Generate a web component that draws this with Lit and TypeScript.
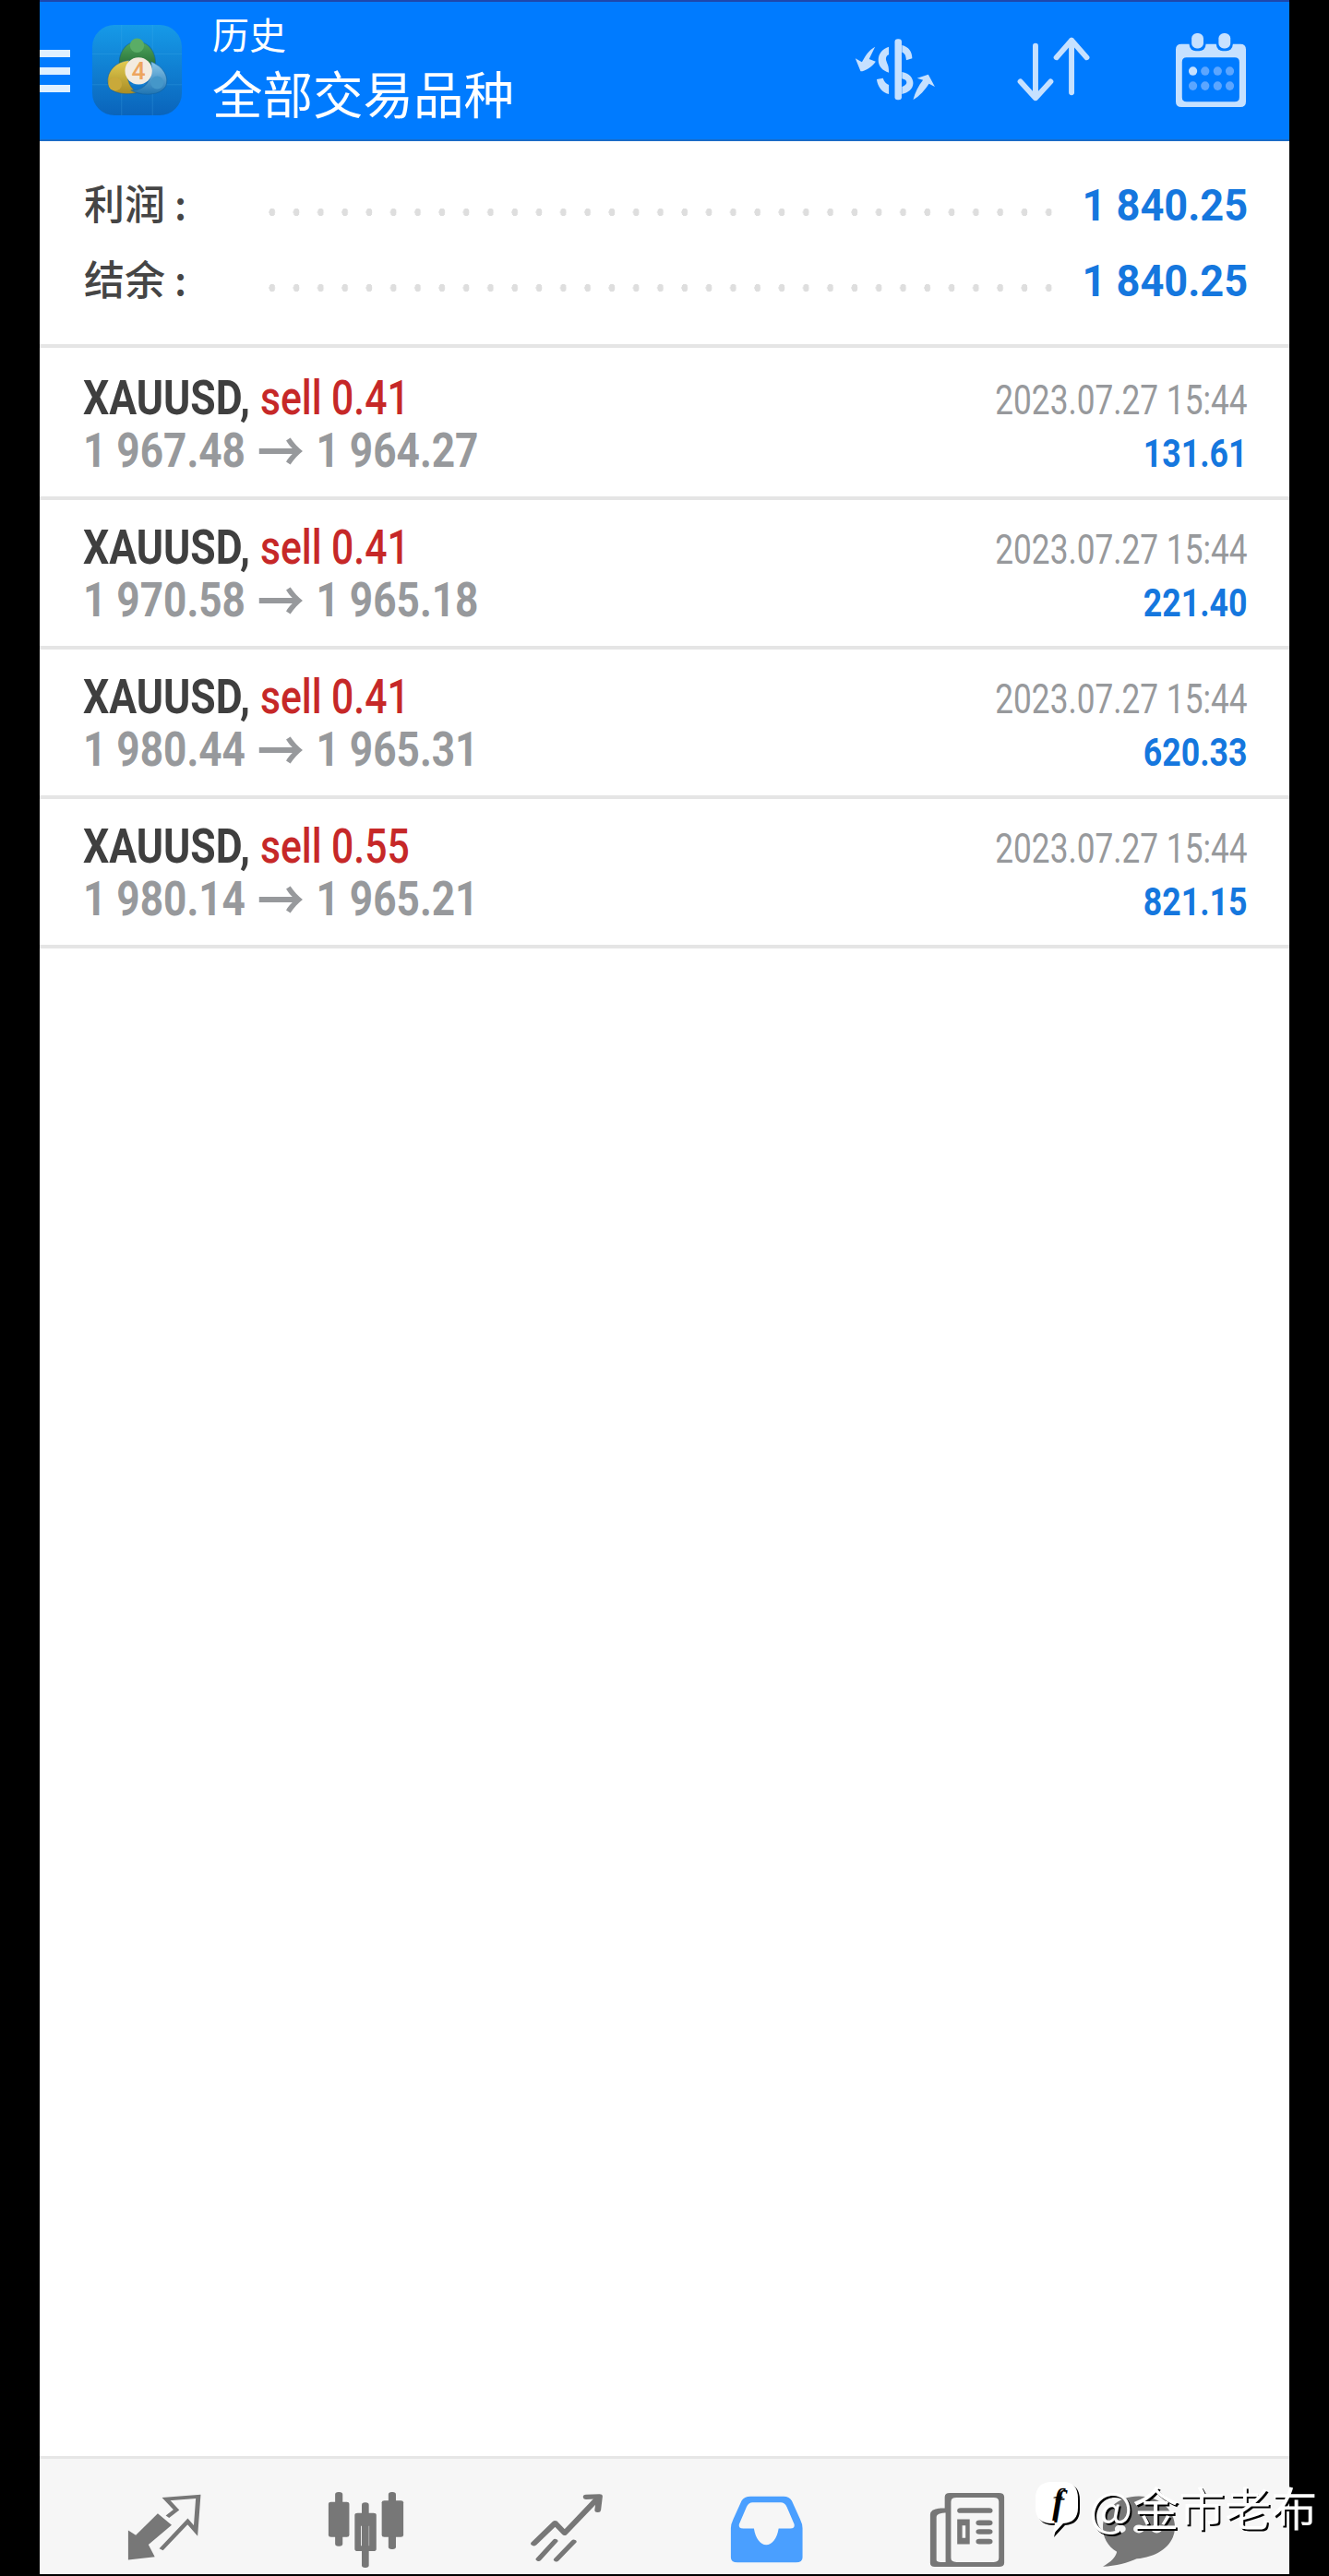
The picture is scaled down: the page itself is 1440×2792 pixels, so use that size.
import { LitElement, html, css, svg } from "lit";
import { customElement } from "lit/decorators.js";

const ROWS = [
  { lot: "0.41", from: "1 967.48", to: "1 964.27", profit: "131.61" },
  { lot: "0.41", from: "1 970.58", to: "1 965.18", profit: "221.40" },
  { lot: "0.41", from: "1 980.44", to: "1 965.31", profit: "620.33" },
  { lot: "0.55", from: "1 980.14", to: "1 965.21", profit: "821.15" },
];

const HI = "#c6e1ff";
const GR = "#777777";

@customElement("app-root")
export class AppRoot extends LitElement {
  static styles = css`
    :host { display: block; }
    .page { background: #000; height: 2792px; padding: 0 43px; box-sizing: border-box; display: flex; flex-direction: column; font-family: Roboto, "Noto Sans CJK SC", sans-serif; position: relative; overflow: hidden; }
    .screen { flex: 1; background: #fff; display: flex; flex-direction: column; margin-bottom: 2px; }
    .top { height: 153px; box-sizing: border-box; background: #007bff; border-top: 2px solid #1d47ad; border-bottom: 2px solid #1a6cc8; display: flex; align-items: center; color: #fff; }
    .burger { width: 33px; display: flex; flex-direction: column; gap: 11px; }
    .burger i { display: block; height: 8px; background: #dff0ff; }
    .logo { width: 97px; height: 98px; margin-left: 24px; margin-top: -2px; display: block; }
    .titles { margin-left: 33px; display: flex; flex-direction: column; gap: 8px; font-family: "Noto Sans CJK SC", sans-serif; margin-top: -6px; }
    .t1 { font-size: 40px; line-height: 44px; }
    .t2 { font-size: 54.5px; line-height: 68px; }
    .acts { margin-left: auto; display: flex; align-items: center; padding-right: 47px; margin-top: -4px; }
    .acts svg { display: block; }
    .i1 { width: 89px; height: 70px; }
    .i2 { width: 82px; height: 72px; margin-left: 86px; }
    .i3 { width: 76px; height: 82px; margin-left: 92px; }
    .summary { padding: 27px 45px 0 48px; box-sizing: border-box; border-bottom: 4px solid #e5e5e5; height: 224px; flex: none; }
    .sum { height: 82px; display: flex; align-items: center; }
    .lab { width: 200px; flex: none; font-family: "Noto Sans CJK SC", sans-serif; font-size: 44px; font-weight: 500; color: #454545; line-height: 82px; margin-top: -2px; margin-bottom: 2px; }
    .dots { flex: 1; height: 10px; margin-top: 18px; background-image: radial-gradient(ellipse 3.6px 4.4px at 3.8px 5px, #dedede 90%, transparent 100%); background-size: 26.3px 10px; background-repeat: repeat-x; margin-right: 32px; }
    .val { font-size: 48px; font-weight: 700; color: #1577de; width: 178px; white-space: nowrap; text-align: right; line-height: 82px; margin-top: 4px; display: flex; justify-content: flex-end; }
    .val span { display: inline-block; transform: scaleX(.94); transform-origin: right; }
    .row { height: 162px; flex: none; box-sizing: border-box; border-bottom: 4px solid #e5e5e5; padding: 23px 45px 0 47px; display: grid; grid-template-columns: 1fr auto; grid-auto-rows: 57px; align-items: baseline; line-height: 57px; }
    .summary + .row { height: 165px; padding-top: 26px; }
    .l1 { display: flex; align-items: baseline; white-space: nowrap; font-size: 52px; }
    .sym { display: inline-block; font-weight: 700; color: #3f3f3f; transform: scaleX(.855); transform-origin: left; margin-right: -20px; }
    .sell { display: inline-block; color: #c62828; font-weight: 500; transform: scaleX(.82); transform-origin: left; }
    .time { font-size: 44px; color: #97999c; transform: scaleX(.8); transform-origin: right; white-space: nowrap; text-align: right; }
    .l2 { font-size: 52px; font-weight: 700; color: #97999c; white-space: nowrap; transform: scaleX(.85); transform-origin: left; }
    .arrow { font-family: "Noto Sans CJK SC", sans-serif; font-size: 60px; line-height: 0; font-weight: 700; margin: 0 15px; vertical-align: -6px; }
    .profit { font-size: 42px; font-weight: 700; color: #1577de; transform: scaleX(.85); transform-origin: right; text-align: right; white-space: nowrap; }
    .fill { flex: 1; }
    .nav { height: 128px; box-sizing: border-box; border-top: 3px solid #e6e6e6; background: #f6f6f6; display: flex; gap: 137px; padding-left: 95px; flex: none; }
    .nav svg { display: block; margin-top: 38px; }
    .n1 { width: 80px; height: 74px; }
    .n2 { width: 83px; height: 82px; margin-top: 36px !important; }
    .n3 { width: 79px; height: 74px; }
    .n4 { width: 79px; height: 73px; margin-top: 40px !important; }
    .n5 { width: 82px; height: 80px; margin-top: 37px !important; }
    .n6 { width: 78px; height: 80px; margin-left: -31px; margin-top: 37px !important; }
    .mark { position: absolute; left: 1122px; top: 2682px; display: flex; align-items: center; gap: 10px; color: #fff; font-family: "Noto Sans CJK SC", sans-serif; font-size: 50px; line-height: 60px; white-space: nowrap; text-shadow: 2px 2px 0 #000; }
    .bubble { width: 48px; height: 60px; display: block; margin-top: 8px; }
  `;

  private logo() {
    return html`<svg class="logo" viewBox="60 45 290 295" preserveAspectRatio="none">
      <defs>
        <linearGradient id="lg" x1="0" y1="0" x2="0" y2="1"><stop offset="0" stop-color="#169ae8"/><stop offset="1" stop-color="#0a64bb"/></linearGradient>
        <linearGradient id="lgy" x1="0" y1="0" x2="0" y2="1"><stop offset="0" stop-color="#e3cd52"/><stop offset="1" stop-color="#a88c24"/></linearGradient>
        <linearGradient id="lgg" x1="0" y1="0" x2="0" y2="1"><stop offset="0" stop-color="#4fa75c"/><stop offset="1" stop-color="#256c35"/></linearGradient>
        <linearGradient id="lgb" x1="0" y1="0" x2="0" y2="1"><stop offset="0" stop-color="#8cc8ea"/><stop offset="1" stop-color="#1f74b2"/></linearGradient>
      </defs>
      <rect x="60" y="45" width="290" height="295" rx="72" fill="url(#lg)"/>
      <path d="M60 140H350M60 240H350M155 45V340M255 45V340" stroke="#4db4ee" stroke-opacity=".35" stroke-width="2"/>
      <path d="M148 185C142 140 165 100 205 100C248 100 270 140 264 185C240 160 172 160 148 185Z" fill="url(#lgg)" stroke="#0f5f9e" stroke-opacity=".55" stroke-width="3"/>
      <circle cx="205" cy="112" r="23" fill="#5aad66"/>
      <path d="M180 160C135 165 108 195 110 232C112 262 150 278 205 266C175 245 165 205 180 160Z" fill="url(#lgy)" stroke="#0f5f9e" stroke-opacity=".55" stroke-width="3"/>
      <circle cx="134" cy="238" r="22" fill="#c9a93a"/>
      <path d="M250 165C290 180 310 215 298 245C280 275 225 280 185 258C225 262 262 225 250 165Z" fill="url(#lgb)" stroke="#0f5f9e" stroke-opacity=".55" stroke-width="3"/>
      <circle cx="270" cy="233" r="21" fill="#4597c9"/>
      <circle cx="210" cy="195" r="44" fill="#f3ebe0"/>
      <text x="210" y="224" text-anchor="middle" font-size="80" font-family="Roboto, sans-serif" font-weight="500" fill="#eda55f">4</text>
    </svg>`;
  }

  private cashIcon() {
    return html`<svg class="i1" viewBox="125 110 250 210" preserveAspectRatio="none">
      <g fill="${HI}">
        <rect x="250" y="117" width="21" height="198" rx="9"/>
        <path d="M272 137C292 142 303 158 303 180L285 186C284 170 280 162 272 160Z"/>
        <path d="M272 224C295 228 306 245 306 260C306 280 290 292 272 296V272C282 268 286 264 286 258C286 252 282 248 272 246Z"/>
        <path d="M232 142V168C222 172 222 182 225 190C228 200 232 202 232 226C212 220 200 205 200 185C200 165 212 148 232 142Z"/>
        <path d="M195 248L214 244C218 256 224 262 232 266V296C212 292 198 272 195 248Z"/>
        <path d="M190 142L172 182L192 190C180 208 160 222 146 222L130 180L150 192C160 172 172 152 190 142Z"/>
        <path d="M306 314C312 290 322 268 336 250L318 244L352 232L372 272L354 262C342 282 326 302 306 314Z"/>
      </g>
    </svg>`;
  }

  private sortIcon() {
    return html`<svg class="i2" viewBox="610 112 235 216" preserveAspectRatio="none">
      <g fill="none" stroke="${HI}" stroke-width="17" stroke-linecap="round" stroke-linejoin="round">
        <path d="M673 144V314M626 260L673 314L720 260"/>
        <path d="M785 296V126M738 182L785 126L832 182"/>
      </g>
    </svg>`;
  }

  private calIcon() {
    const blue = "#5ca6ff";
    return html`<svg class="i3" viewBox="1103 95 213 240" preserveAspectRatio="none">
      <path fill-rule="evenodd" fill="${HI}" d="M1120 135H1299Q1316 135 1316 152V318Q1316 335 1299 335H1120Q1103 335 1103 318V152Q1103 135 1120 135ZM1136 178Q1122 178 1122 192V304Q1122 318 1136 318H1282Q1296 318 1296 304V192Q1296 178 1282 178Z"/>
      <rect x="1144" y="95" width="50" height="62" rx="20" fill="#007bff"/>
      <rect x="1226" y="95" width="50" height="62" rx="20" fill="#007bff"/>
      <rect x="1151" y="101" width="36" height="48" rx="16" fill="${HI}"/>
      <rect x="1233" y="101" width="36" height="48" rx="16" fill="${HI}"/>
      ${[1155, 1192, 1230, 1267].map((x, i) => svg`
        <ellipse cx="${x}" cy="221" rx="13" ry="14" fill="${i === 0 ? HI : blue}"/>
        <ellipse cx="${x}" cy="268" rx="13" ry="14" fill="${blue}"/>`)}
    </svg>`;
  }

  private navIcons() {
    return html`
      <svg class="n1" viewBox="300 200 175 215" preserveAspectRatio="none">
        <path fill="${GR}" d="M302 408V315L320 330L372 262L405 298L350 360L365 398Z"/>
        <path fill="none" stroke="${GR}" stroke-width="11" d="M395 272L416 250L392 216L468 208L462 316L443 287L380 375"/>
      </svg>
      <svg class="n2" viewBox="768 180 184 246" preserveAspectRatio="none">
        <g fill="${GR}">
          <rect x="786" y="180" width="18" height="176" rx="8"/>
          <rect x="770" y="212" width="50" height="114" rx="6"/>
          <rect x="850" y="214" width="17" height="212" rx="8"/>
          <rect x="914" y="180" width="18" height="186" rx="8"/>
          <rect x="898" y="208" width="52" height="118" rx="6"/>
          <path fill-rule="evenodd" d="M840 248H878Q885 248 885 255V365Q885 372 878 372H840Q833 372 833 365V255Q833 248 840 248ZM848 290V355H868V290Z"/>
        </g>
      </svg>
      <svg class="n3" viewBox="1246 190 176 220" preserveAspectRatio="none">
        <g fill="none" stroke="${GR}" stroke-linecap="round" stroke-linejoin="round">
          <path stroke-width="15" d="M1254 350L1305 284L1328 316L1408 204"/>
          <path stroke-width="15" d="M1380 200L1412 198L1408 242"/>
          <path stroke-width="13" d="M1305 342L1265 400M1350 344L1308 402"/>
        </g>
      </svg>
      <svg class="n4" viewBox="150 188 177 222" preserveAspectRatio="none">
        <path fill="#4a9fff" fill-rule="evenodd" d="M200 190H280Q294 190 300 205L320 265Q326 282 326 295V392Q326 408 310 408H168Q152 408 152 392V295Q152 282 158 265L178 205Q184 190 200 190ZM205 210Q195 210 190 225L172 282Q170 296 182 296H208C212 330 224 350 238 350C252 350 264 330 268 296H296Q308 296 306 282L288 225Q283 210 273 210Z"/>
      </svg>
      <svg class="n5" viewBox="623 180 182 238" preserveAspectRatio="none">
        <g fill="${GR}">
          <path fill-rule="evenodd" d="M672 180H790Q803 180 803 193V405Q803 418 790 418H636Q625 418 625 405V250Q625 232 650 229H660V193Q660 180 672 180ZM688 195Q675 195 675 208V390Q675 403 688 403H778Q790 403 790 390V208Q790 195 778 195ZM660 244Q640 246 640 258V396Q640 403 650 403H662V244Z"/>
          <rect x="690" y="228" width="85" height="17" rx="8"/>
          <rect x="735" y="268" width="40" height="17" rx="8"/>
          <rect x="735" y="297" width="40" height="16" rx="8"/>
          <rect x="735" y="328" width="40" height="17" rx="8"/>
          <path fill-rule="evenodd" d="M690 265H720V345H690ZM702 285V325H710V285Z"/>
        </g>
      </svg>
      <svg class="n6" viewBox="1035 180 170 236" preserveAspectRatio="none">
        <path fill="${GR}" d="M1120 190C1170 190 1205 235 1205 290C1205 345 1165 385 1115 390C1095 402 1065 414 1035 415C1055 400 1065 385 1068 368C1045 350 1035 320 1035 290C1035 235 1070 190 1120 190Z"/>
        <ellipse cx="1076" cy="295" rx="13" ry="13" fill="#f6f6f6"/>
        <ellipse cx="1120" cy="295" rx="13" ry="13" fill="#f6f6f6"/>
        <ellipse cx="1162" cy="295" rx="13" ry="13" fill="#f6f6f6"/>
      </svg>`;
  }

  render() {
    return html`<div class="page">
      <div class="screen">
        <header class="top">
          <div class="burger"><i></i><i></i><i></i></div>
          ${this.logo()}
          <div class="titles"><span class="t1">历史</span><span class="t2">全部交易品种</span></div>
          <div class="acts">${this.cashIcon()}${this.sortIcon()}${this.calIcon()}</div>
        </header>
        <section class="summary">
          <div class="sum"><span class="lab">利润 :</span><span class="dots"></span><span class="val"><span>1 840.25</span></span></div>
          <div class="sum"><span class="lab">结余 :</span><span class="dots"></span><span class="val"><span>1 840.25</span></span></div>
        </section>
        ${ROWS.map((r) => html`<div class="row">
          <div class="l1"><span class="sym">XAUUSD,</span><span class="sell">sell ${r.lot}</span></div>
          <div class="time">2023.07.27 15:44</div>
          <div class="l2">${r.from}<span class="arrow">→</span>${r.to}</div>
          <div class="profit">${r.profit}</div>
        </div>`)}
        <div class="fill"></div>
        <nav class="nav">${this.navIcons()}</nav>
      </div>
      <div class="mark">
        <svg class="bubble" viewBox="0 0 48 60">
          <path d="M18 0H30Q46 0 46 18V28Q46 44 30 45L18 58L21 45H16Q0 44 0 28V18Q0 0 18 0Z" fill="#000" transform="translate(2 2)"/>
          <path d="M18 0H30Q46 0 46 18V28Q46 44 30 45L18 58L21 45H16Q0 44 0 28V18Q0 0 18 0Z" fill="#fff"/>
          <text x="23" y="34" text-anchor="middle" font-size="38" font-style="italic" font-family="'Liberation Serif', serif" fill="#000">f</text>
        </svg>
        <span>@金市老布</span>
      </div>
    </div>`;
  }
}
